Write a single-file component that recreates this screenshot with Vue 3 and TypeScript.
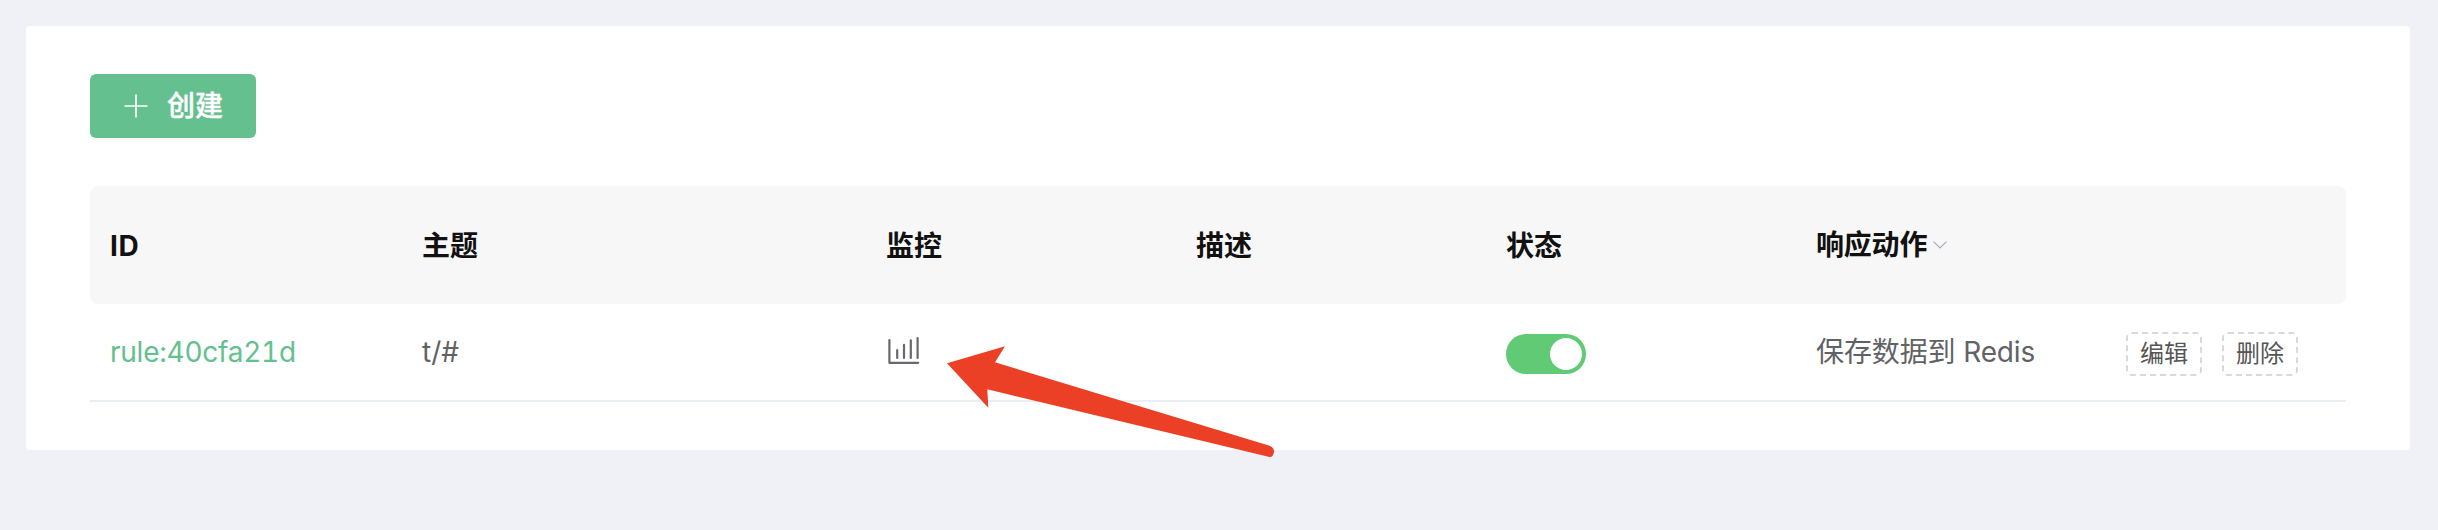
<script setup lang="ts">
import { ref } from 'vue'

interface Rule {
  id: string
  topic: string
  description: string
  enabled: boolean
  action: string
}

const rules = ref<Rule[]>([
  { id: 'rule:40cfa21d', topic: 't/#', description: '', enabled: true, action: '保存数据到 Redis' },
])
</script>

<template>
  <main class="page">
    <section class="panel">
      <button class="create" type="button">
        <svg class="plus" viewBox="0 0 24 24" width="24" height="24">
          <path d="M12 1.2V22.8M1.2 12H22.8" />
        </svg>
        <span class="create-label">创建</span>
      </button>

      <div class="table">
        <div class="row head">
          <div class="cell"><span class="latin">ID</span></div>
          <div class="cell">主题</div>
          <div class="cell">监控</div>
          <div class="cell">描述</div>
          <div class="cell">状态</div>
          <div class="cell filter">
            <span>响应动作</span>
            <svg class="chevron" viewBox="0 0 14 8" width="14" height="8">
              <path d="M.6 .6L7 7L13.4 .6" />
            </svg>
          </div>
          <div class="cell"></div>
        </div>
        <div v-for="rule in rules" :key="rule.id" class="row body">
          <div class="cell"><a class="link">{{ rule.id }}</a></div>
          <div class="cell topic">{{ rule.topic }}</div>
          <div class="cell monitor">
            <svg class="chart" viewBox="0 0 34 28" width="34" height="28">
              <path d="M3.4 4V26.8H32.2M11.2 14.2V22M18 8.8V22M24.8 4.4V22M31.6 2V22" />
            </svg>
          </div>
          <div class="cell">{{ rule.description }}</div>
          <div class="cell state">
            <button
              class="switch"
              :class="{ on: rule.enabled }"
              type="button"
              role="switch"
              :aria-checked="rule.enabled"
              @click="rule.enabled = !rule.enabled"
            >
              <span class="knob"></span>
            </button>
          </div>
          <div class="cell action">{{ rule.action }}</div>
          <div class="cell ops">
            <button class="op" type="button">编辑</button>
            <button class="op" type="button">删除</button>
          </div>
        </div>
      </div>

      <svg class="arrow" viewBox="0 0 330 114" width="330" height="114">
        <path d="M2 19.3L60 2.3L50 18.3L323.8 101.4Q329.6 103.5 329 108Q328 113.4 324.6 113L42.3 45.3L43.3 63.7Z" />
      </svg>
    </section>
  </main>
</template>

<style>
body {
  background: #eff1f6;
}
</style>

<style scoped>
.page {
  box-sizing: border-box;
  min-height: 530px;
  padding: 26px 28px 80px 26px;
  background: #eff1f6;
  font-family: Inter, "Noto Sans CJK SC", sans-serif;
  font-size: 28px;
  color: #606266;
}

.panel {
  position: relative;
  box-sizing: border-box;
  height: 424px;
  padding: 48px 64px;
  border-radius: 4px;
  background: #fff;
}

button {
  font-family: inherit;
  margin: 0;
  cursor: pointer;
}

.create {
  display: flex;
  align-items: center;
  gap: 19px;
  width: 166px;
  height: 64px;
  padding: 0 0 0 34px;
  border: 0;
  border-radius: 6px;
  background: #64c08e;
  box-shadow: 0 4px 0 rgba(0, 0, 0, 0.015);
  color: #fff;
  font-size: 28px;
  font-weight: 500;
  line-height: 40px;
}

.create-label {
  -webkit-text-stroke: 0.4px #fff;
}

.plus,
.chevron,
.chart {
  display: block;
  flex: none;
  fill: none;
}

.plus {
  stroke: #fff;
  stroke-width: 1.7;
  stroke-linecap: round;
}

.table {
  margin-top: 48px;
}

.row {
  display: grid;
  grid-template-columns: 312px 464px 310px 310px 310px 310px 240px;
}

.cell {
  display: flex;
  align-items: center;
  padding: 0 20px;
  line-height: 40px;
  white-space: nowrap;
}

.head {
  height: 118px;
  border-radius: 8px;
  background: #f7f7f7;
  color: #111;
  font-weight: 600;
}

.head .cell {
  padding-top: 2px;
}

.head .filter {
  gap: 6px;
  padding-top: 0;
  letter-spacing: -0.2px;
}

.latin {
  font-weight: 700;
  letter-spacing: 0.6px;
}

.chevron {
  stroke: #a8abb2;
  stroke-width: 1.2;
}

.body {
  height: 96px;
  border-bottom: 2px solid #ebeef5;
}

.link {
  color: #64c08e;
  font-variant-numeric: tabular-nums;
  letter-spacing: -0.25px;
}

.monitor {
  padding-bottom: 4px;
}

.chart {
  stroke: #68696d;
  stroke-width: 2.2;
  stroke-linecap: round;
  stroke-linejoin: round;
}

.state,
.ops {
  padding-top: 4px;
}

.action {
  letter-spacing: -0.12px;
}

.switch {
  display: flex;
  align-items: center;
  width: 80px;
  height: 40px;
  padding: 4px;
  border: 0;
  border-radius: 20px;
  background: #c0c4cc;
}

.switch.on {
  justify-content: flex-end;
  background: #60ca74;
}

.knob {
  width: 32px;
  height: 32px;
  border-radius: 50%;
  background: #fff;
}

.ops {
  gap: 20px;
}

.op {
  width: 76px;
  height: 44px;
  padding: 0;
  border: 2px dashed #d9d9d9;
  border-radius: 6px;
  background: #fff;
  color: #555;
  font-size: 24px;
  line-height: 36px;
}

.arrow {
  position: absolute;
  left: 919px;
  top: 318px;
  fill: #eb4026;
}
</style>
